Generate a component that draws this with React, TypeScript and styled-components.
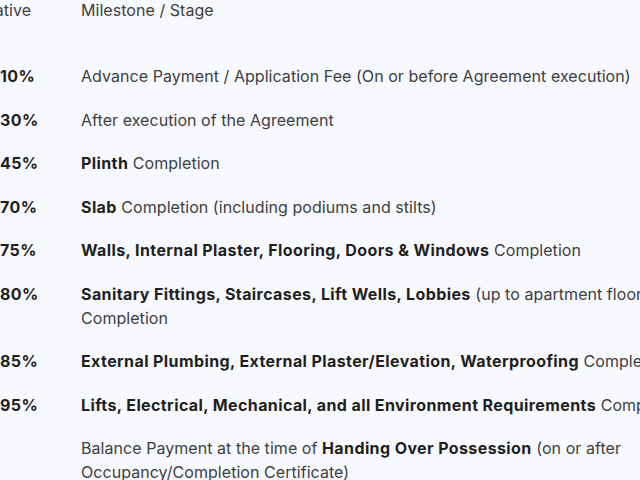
import { FC, Fragment, ReactNode } from "react";
import styled, { createGlobalStyle } from "styled-components";

const GlobalStyle = createGlobalStyle`
  html, body {
    margin: 0;
    padding: 0;
    background: #f8f9fc;
    overflow: hidden;
  }
  body {
    font-family: Inter, "Noto Sans", Arial, sans-serif;
    -webkit-font-smoothing: antialiased;
  }
`;

// the table is scrolled: its top and left edge sit outside the window
const Viewport = styled.div`
  width: 640px;
  height: 480px;
  overflow: hidden;
`;

const Table = styled.div`
  display: grid;
  grid-template-columns: 81px 640px;
  margin-top: -2px;
  color: #3c4043;
  font-size: 16px;
  line-height: 24px;
  letter-spacing: 0.05px;
`;

const HeadCell = styled.div<{ $shift?: number }>`
  padding: 0 0 32px;
  margin-left: ${(p) => p.$shift ?? 0}px;
  white-space: nowrap;
  color: #3c4043;
`;

const PercentCell = styled.div`
  padding: 10px 0 9.5px;
  font-weight: 700;
  letter-spacing: 0.4px;
  color: #1f1f1f;
`;

const StageCell = styled.div`
  padding: 10px 0 9.5px;
`;

const Strong = styled.b`
  font-weight: 700;
  letter-spacing: 0.4px;
  color: #1f1f1f;
`;

type Row = { pct: string; stage: ReactNode };

const rows: Row[] = [
  {
    pct: "10%",
    stage: "Advance Payment / Application Fee (On or before Agreement execution)",
  },
  { pct: "30%", stage: "After execution of the Agreement" },
  {
    pct: "45%",
    stage: (
      <>
        <Strong>Plinth</Strong> Completion
      </>
    ),
  },
  {
    pct: "70%",
    stage: (
      <>
        <Strong>Slab</Strong> Completion (including podiums and stilts)
      </>
    ),
  },
  {
    pct: "75%",
    stage: (
      <>
        <Strong>Walls, Internal Plaster, Flooring, Doors &amp; Windows</Strong>{" "}
        Completion
      </>
    ),
  },
  {
    pct: "80%",
    stage: (
      <>
        <Strong>Sanitary Fittings, Staircases, Lift Wells, Lobbies</Strong> (up
        to apartment floors) Completion
      </>
    ),
  },
  {
    pct: "85%",
    stage: (
      <>
        <Strong>
          External Plumbing, External Plaster/Elevation, Waterproofing
        </Strong>{" "}
        Completion
      </>
    ),
  },
  {
    pct: "95%",
    stage: (
      <>
        <Strong>
          Lifts, Electrical, Mechanical, and all Environment Requirements
        </Strong>{" "}
        Completion
      </>
    ),
  },
  {
    pct: "",
    stage: (
      <>
        Balance Payment at the time of <Strong>Handing Over Possession</Strong>{" "}
        (on or after Occupancy/Completion Certificate)
      </>
    ),
  },
];

const App: FC = () => {
  return (
    <Viewport>
      <GlobalStyle />
      <Table>
        <HeadCell $shift={-54}>Cumulative</HeadCell>
        <HeadCell>Milestone / Stage</HeadCell>
        {rows.map((row, i) => (
          <Fragment key={i}>
            <PercentCell>{row.pct}</PercentCell>
            <StageCell>{row.stage}</StageCell>
          </Fragment>
        ))}
      </Table>
    </Viewport>
  );
};

export default App;
